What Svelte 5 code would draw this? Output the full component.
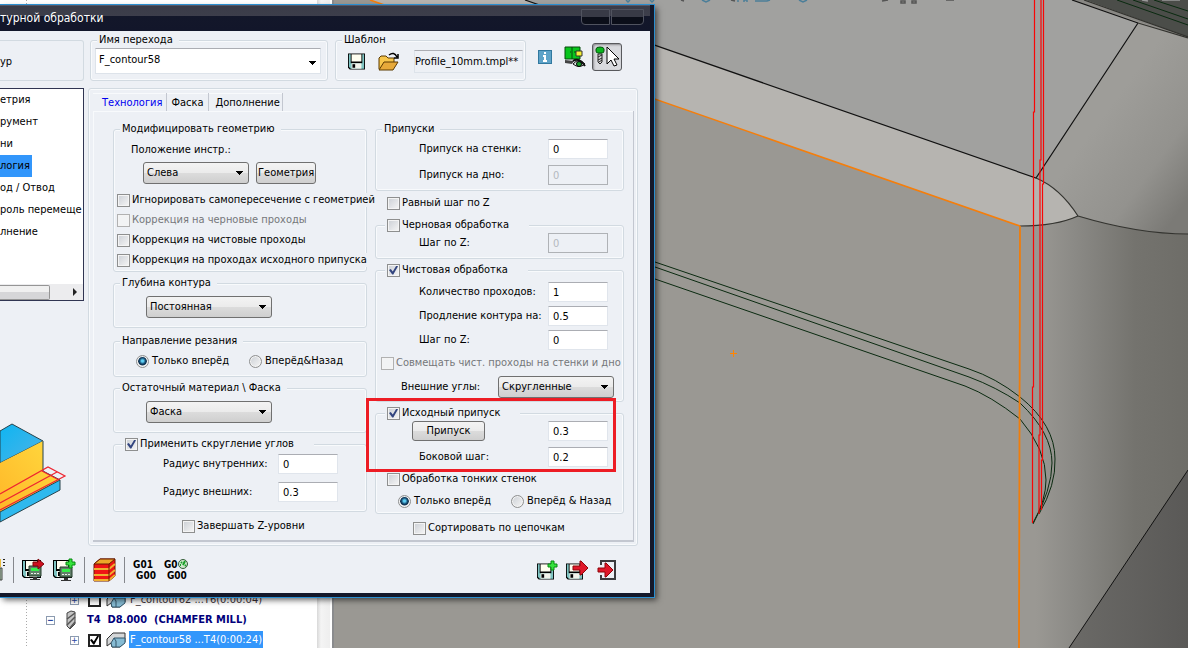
<script lang="ts">
  const pages = [
    "етрия",
    "румент",
    "ни",
    "логия",
    "од / Отвод",
    "роль перемеще",
    "лнение",
  ];
  let activePage = $state("логия");

  const tabs = ["Технология", "Фаска", "Дополнение"];
  let activeTab = $state("Технология");

  let operationName = $state("F_contour58");
  let direction = $state("forward");
  let thinDirection = $state("forward");

  const corrections = [
    { id: "ignore", label: "Игнорировать самопересечение с геометрией", disabled: false },
    { id: "rough", label: "Коррекция на черновые проходы", disabled: true },
    { id: "finish", label: "Коррекция на чистовые проходы", disabled: false },
    { id: "stock", label: "Коррекция на проходах исходного припуска", disabled: false },
  ];
</script>

{#snippet disk()}
  <path d="M0 0h19v18h-17l-2-2z" fill="#000" />
  <path d="M1 1h2v10h13v-10h2v16h-15l-2-2z" fill="#7fc4c2" />
  <path d="M4 1h11v8h-11z" fill="#fffef0" />
  <path d="M4 11h11v6h-11z" fill="#f4f4ec" />
  <path d="M5 12h3v4h-3z" fill="#000" />
{/snippet}

{#snippet arrow()}
  <path d="M0 5h7v-5h1l7 7-7 7h-1v-5h-7z" fill="#e0182a" stroke="#8d0508" />
{/snippet}

{#snippet plus()}
  <path d="M4 1h3v3h3v3h-3v3h-3v-3h-3v-3h3z" fill="#35e23c" stroke="#078a10" />
{/snippet}

{#snippet machine()}
  <path d="M0 0h12v10h-12z" fill="#62806a" stroke="#243c2b" />
  <path d="M2 2h8v3h-8z" fill="#35f04a" />
  <path d="M2 7h2v1h-2zM5 7h2v1h-2zM8 7h2v1h-2z" fill="#e8efe8" />
  <path d="M4 11h4v2h3v1h-10v-1h3z" fill="#333" />
{/snippet}

{#snippet part()}
  <svg width="20" height="16" viewBox="0 0 20 16">
    <path d="M1 7l6-6h12v9l-5 5h-8l-1-4-4 3z" fill="#d5d7d8" stroke="#333" />
    <path d="M5 11l3-5h11v5l-5 4h-8z" fill="#86bbd3" stroke="#34566a" />
    <path d="M8 6l2 3v6" fill="none" stroke="#34566a" />
  </svg>
{/snippet}

<div class="workspace">
  <svg class="scene" viewBox="334 0 854 648" preserveAspectRatio="xMinYMin slice" aria-hidden="true">
    <defs>
      <linearGradient id="round" gradientUnits="userSpaceOnUse" x1="1036" y1="0" x2="1188" y2="0">
        <stop offset="0" stop-color="#9a9893" />
        <stop offset=".25" stop-color="#8b8a86" />
        <stop offset=".65" stop-color="#74736e" />
        <stop offset="1" stop-color="#6e6d68" />
      </linearGradient>
      <linearGradient id="slope" gradientUnits="userSpaceOnUse" x1="1100" y1="120" x2="1195" y2="190">
        <stop offset="0" stop-color="#9e9d99" />
        <stop offset=".6" stop-color="#93928e" />
        <stop offset="1" stop-color="#7b7a76" />
      </linearGradient>
      <linearGradient id="dark" x1="0" y1="0" x2="1" y2="0">
        <stop offset="0" stop-color="#6b6a67" />
        <stop offset="1" stop-color="#5a5957" />
      </linearGradient>
    </defs>
    <rect x="334" width="854" height="648" fill="#9a9893" />
    <path d="M525 0h547l66 23-102 155z" fill="#a1a19f" />
    <path d="M370 0h155l511 178q24 10 42 38-22 10-58 10z" fill="#b6b4b0" />
    <path d="M1036 178l102-155 50 15v196q-50 0-110-18-18-28-42-38z" fill="url(#slope)" />
    <path d="M1036 226q24-2 42-10 60 18 110 18v414h-152z" fill="url(#round)" />
    <path d="M1188 470v178h-119z" fill="url(#dark)" />
    <path d="M1072 0h116v38z" fill="#898884" />
    <path d="M1086 0h102v37z" fill="#4b4d49" />
    <g fill="none" stroke="#111" stroke-width="1.2">
      <path d="M525 0l511 178 102-155M1072 0l66 23" />
      <path d="M1138 23l50 15M1036 178q24 10 42 38-22 10-58 10M1078 216q60 18 110 18" stroke="#33332f" />
      <path d="M1084 0l104 37" stroke="#33332f" />
      <path d="M1188 470l-119 178" stroke-width="1" />
    </g>
    <g fill="none" stroke="#0a2a10">
      <path d="M655 262l314 107q27 9 51 28 35 28 35 62 1 26-16 55" />
      <path d="M655 267l314 110q27 10 51 26 32 30 32 60 0 26-19 61" />
      <path d="M655 279l310 107q26 10 55 33 26 30 26 61 0 20-13 43" />
      <path d="M1117 0l71 25M1133 0l55 19M1154 0l34 11" />
    </g>
    <path d="M370 0l650 226" fill="none" stroke="#f57e0b" stroke-width="1.6" />
    <path d="M1020 226l-1 422" fill="none" stroke="#ef7d0c" stroke-width="1.8" />
    <path d="M730 353.500h7M733.500 350v7" stroke="#ff8400" />
    <path
      d="M1034.500 0v112h-1v275h-1v136M1041 0v160h-1v275h-1v79M1043.500 0v184h-1v276h-1v50"
      fill="none"
      stroke="#f80606"
      stroke-width="1.2"
    />
    <g fill="none" stroke="#4c7f99" stroke-width="1.500">
      <path d="M626 0l2 2 2-2M650 0l2 2 2-2M702 0l4 2 4-2M738 2v-2M744 2v-2h3v2M755 1h12l3-1M799 0l4 2 4-2" />
      <path d="M681 0l3 1M731 0l4 1M882 1l6-1M901 1h4v2h-4zM912 1h4v2h-4zM946 0h8" stroke="#555" />
      <path d="M1142 0l6 1M1162 0h18" stroke="#999" />
    </g>
  </svg>

  <aside class="tree">
    <div class="tree-rows">
      <div class="tree-row child">
        <span class="expander">+</span>
        <input type="checkbox" class="tree-check" aria-label="F_contour62" />
        {@render part()}
        <span class="tree-name">F_contour62 ...T6(0:00:04)</span>
      </div>
      <div class="tree-row tool">
        <span class="expander">−</span>
        <svg width="14" height="20" viewBox="0 0 14 20">
          <path d="M3 3l4-2 4 1v12l-5 5-3-3z" fill="#c4c4c4" stroke="#444" />
          <path d="M3 9l8-6M3 15l8-8M6 18l5-6" stroke="#555" stroke-width="1.500" />
        </svg>
        <span>T4&nbsp; D8.000&nbsp; (CHAMFER MILL)</span>
      </div>
      <div class="tree-row child">
        <span class="expander">+</span>
        <input type="checkbox" class="tree-check" aria-label="F_contour58" checked />
        {@render part()}
        <span class="tree-name selected">F_contour58 ...T4(0:00:24)</span>
      </div>
    </div>
    <div class="tree-scroll"></div>
  </aside>

  <section class="dialog">
    <header class="titlebar">
      <h1>турной обработки</h1>
      <div class="caption-buttons">
        <button aria-label="Свернуть"></button>
        <button aria-label="Закрыть"></button>
      </div>
    </header>

    <div class="client">
      <div class="top-row">
        <div class="type-box">ур</div>

        <fieldset class="name-box">
          <legend>Имя перехода</legend>
          <select class="name-select" bind:value={operationName} aria-label="Имя перехода">
            <option>F_contour58</option>
            <option>F_contour62</option>
          </select>
        </fieldset>

        <fieldset class="template-box">
          <legend>Шаблон</legend>
          <div class="template-row">
            <button class="icon" aria-label="Сохранить шаблон">
              <svg width="17" height="17" viewBox="0 0 19 18">{@render disk()}</svg>
            </button>
            <button class="icon" aria-label="Открыть шаблон">
              <svg width="22" height="20" viewBox="0 0 22 20">
                <path d="M1 17v-11l2-2h5l2 2h6v4" fill="#f7c64b" stroke="#5d3a00" />
                <path d="M1 18l5-8h14l-5 8z" fill="#e7a93a" stroke="#5d3a00" />
                <path d="M11 3q5-4 8 2M20 2v4h-4" fill="none" stroke="#000" stroke-width="1.500" />
              </svg>
            </button>
            <input class="template-name" value="Profile_10mm.tmpl**" readonly aria-label="Шаблон" />
          </div>
        </fieldset>

        <div class="view-tools">
          <button class="icon" aria-label="Информация">
            <svg width="14" height="14" viewBox="0 0 14 14">
              <path d="M0 0h14v14h-14z" fill="#31789f" />
              <path d="M1 1h12v12h-12z" fill="#5ea3c8" />
              <path d="M6 2h2v2h-2zM5 5h3v5h1v2h-4v-2h1v-3h-1z" fill="#fff" />
            </svg>
          </button>
          <button class="icon" aria-label="Показать">
            <svg width="22" height="22" viewBox="0 0 22 22">
              <path d="M1 1h15v12h-15z" fill="#08c51c" stroke="#064b0c" />
              <path d="M8 1v12M6 6h1M10 6h2" stroke="#064b0c" />
              <path d="M12 5h6v5h-6z" fill="#f5ef35" stroke="#333" />
              <path d="M1 14l9 1-2 3-7-1z" fill="#444" />
              <path d="M9 18q6-7 12 0-6 5-12 0z" fill="#dfe7e2" stroke="#111" />
              <circle cx="15" cy="18" r="2.500" fill="#17a32a" stroke="#000" />
              <path d="M9 15q6-4 12 5" fill="none" stroke="#111" stroke-width="2" />
            </svg>
          </button>
          <button class="icon pressed" aria-label="Выбрать инструмент">
            <svg width="24" height="22" viewBox="0 0 24 22">
              <path d="M3 8h4v8l-2 2-2-2z" fill="#ddd" stroke="#222" />
              <path d="M3 11l4-2M3 14l4-2M4 16l3-2" stroke="#222" />
              <path d="M1 3q0-2 4-2t4 2v2q0 2-2 2h-4q-2 0-2-2z" fill="#0bb51d" stroke="#05520d" />
              <path d="M12 1v17l4-4 3 6 3-1-3-6h5z" fill="#fff" stroke="#000" />
            </svg>
          </button>
        </div>
      </div>

      <div class="middle">
        <div class="side">
          <div class="page-list">
            <ul>
              {#each pages as page}
                <li>
                  <button class:active={activePage === page} onclick={() => (activePage = page)}>{page}</button>
                </li>
              {/each}
            </ul>
            <div class="list-scroll"><span class="thumb"></span><span class="scroll-arrow"></span></div>
          </div>
          <svg class="preview" width="67" height="102" viewBox="0 0 67 102" aria-hidden="true">
            <defs>
              <linearGradient id="top" x1="0" y1="0" x2="1" y2="1">
                <stop offset="0" stop-color="#0db5f2" />
                <stop offset="1" stop-color="#4fb3e6" />
              </linearGradient>
              <linearGradient id="wall" x1="0" y1="1" x2="1" y2="0">
                <stop offset="0" stop-color="#ffb628" />
                <stop offset="1" stop-color="#ffdb3f" />
              </linearGradient>
            </defs>
            <path d="M0 8l12-7 31 17-43 22z" fill="url(#top)" stroke="#27434c" />
            <path d="M0 40l43-22v30l17 9-60 33z" fill="url(#wall)" />
            <path d="M43 18v30l17 9" fill="none" stroke="#27434c" />
            <path d="M0 89l60-32v10l-60 32z" fill="#2fb9ee" stroke="#27434c" />
            <path d="M0 71l48-27 17 9-65 34M0 80l57-31M42 48l17 9" fill="none" stroke="#ee2530" stroke-width="1.200" />
          </svg>
        </div>

        <div class="tab-frame">
          <div class="tabs">
            {#each tabs as tab}
              <button class:active={activeTab === tab} onclick={() => (activeTab = tab)}>{tab}</button>
            {/each}
          </div>

          <div class="tab-body">
            <div class="column">
              <fieldset class="group modify">
                <legend>Модифицировать геометрию</legend>
                <label class="line position" for="position">Положение инстр.:</label>
                <div class="row position-row">
                  <select id="position" class="short"><option>Слева</option><option>Справа</option></select>
                  <button class="push">Геометрия</button>
                </div>
                {#each corrections as item}
                  <label class="check" class:disabled={item.disabled}>
                    <input type="checkbox" disabled={item.disabled} /><span>{item.label}</span>
                  </label>
                {/each}
              </fieldset>

              <fieldset class="group">
                <legend>Глубина контура</legend>
                <div class="row single">
                  <select aria-label="Глубина контура"><option>Постоянная</option><option>Переменная</option></select>
                </div>
              </fieldset>

              <fieldset class="group cutting">
                <legend>Направление резания</legend>
                <div class="radios">
                  <label><input type="radio" name="dir" value="forward" bind:group={direction} />Только вперёд</label>
                  <label><input type="radio" name="dir" value="both" bind:group={direction} />Вперёд&amp;Назад</label>
                </div>
              </fieldset>

              <fieldset class="group">
                <legend>Остаточный материал \ Фаска</legend>
                <div class="row single">
                  <select aria-label="Остаточный материал \ Фаска"><option>Фаска</option><option>Нет</option></select>
                </div>
              </fieldset>

              <fieldset class="group">
                <legend class="with-check">
                  <label><input type="checkbox" checked />Применить скругление углов</label>
                </legend>
                <div class="fields radii">
                  <label for="inner">Радиус внутренних:</label>
                  <input id="inner" type="text" value="0" />
                  <label for="outer">Радиус внешних:</label>
                  <input id="outer" type="text" value="0.3" />
                </div>
              </fieldset>

              <label class="footer-check"><input type="checkbox" />Завершать Z-уровни</label>
            </div>

            <div class="column">
              <fieldset class="group">
                <legend>Припуски</legend>
                <div class="fields stock">
                  <label for="wall-stock">Припуск на стенки:</label>
                  <input id="wall-stock" type="text" value="0" />
                  <label for="floor-stock">Припуск на дно:</label>
                  <input id="floor-stock" type="text" value="0" disabled />
                </div>
              </fieldset>

              <label class="equal-step"><input type="checkbox" />Равный шаг по Z</label>

              <fieldset class="group">
                <legend class="with-check">
                  <label><input type="checkbox" />Черновая обработка</label>
                </legend>
                <div class="fields roughing">
                  <label for="rough-step">Шаг по Z:</label>
                  <input id="rough-step" type="text" value="0" disabled />
                </div>
              </fieldset>

              <fieldset class="group">
                <legend class="with-check">
                  <label><input type="checkbox" checked />Чистовая обработка</label>
                </legend>
                <div class="fields finishing">
                  <label for="passes">Количество проходов:</label>
                  <input id="passes" type="text" value="1" />
                  <label for="extend">Продление контура на:</label>
                  <input id="extend" type="text" value="0.5" />
                  <label for="finish-step">Шаг по Z:</label>
                  <input id="finish-step" type="text" value="0" />
                </div>
                <label class="combine disabled">
                  <input type="checkbox" disabled />Совмещать чист. проходы на стенки и дно
                </label>
                <div class="row corners">
                  <label for="corners">Внешние углы:</label>
                  <select id="corners"><option>Скругленные</option><option>Острые</option></select>
                </div>
              </fieldset>

              <fieldset class="group">
                <legend class="with-check">
                  <label><input type="checkbox" checked />Исходный припуск</label>
                </legend>
                <div class="highlight"></div>
                <div class="fields source">
                  <button class="push">Припуск</button>
                  <input type="text" value="0.3" aria-label="Припуск" />
                  <label for="side-step">Боковой шаг:</label>
                  <input id="side-step" type="text" value="0.2" />
                </div>
                <label class="thin"><input type="checkbox" />Обработка тонких стенок</label>
                <div class="radios thin-radios">
                  <label><input type="radio" name="thin" value="forward" bind:group={thinDirection} />Только вперёд</label>
                  <label><input type="radio" name="thin" value="both" bind:group={thinDirection} />Вперёд &amp; Назад</label>
                </div>
              </fieldset>

              <label class="footer-check"><input type="checkbox" />Сортировать по цепочкам</label>
            </div>
          </div>
        </div>
      </div>

      <footer class="toolbar">
        <button class="icon" aria-label="Симуляция">
          <svg width="5" height="24" viewBox="0 0 5 24">
            <path d="M0 1h1v8h-1z" fill="#e8b93a" />
            <path d="M3 1h2v1h-2zM3 4h2v1h-2zM3 7h2v1h-2z" fill="#222" />
            <path d="M0 10h2v12h-2z" fill="#b8d4b8" stroke="#444" />
          </svg>
        </button>
        <span class="divider"></span>
        <button class="icon" aria-label="Сохранить и рассчитать">
          <svg width="23" height="24" viewBox="0 0 23 24">
            <g transform="translate(0 2)">{@render disk()}</g>
            <g transform="translate(7 8)">{@render machine()}</g>
            <path d="M11 4h5v-3l6 5-6 5v-3h-5z" fill="#cf1020" stroke="#7e0509" />
          </svg>
        </button>
        <button class="icon copy" aria-label="Сохранить, копировать и рассчитать">
          <svg width="23" height="24" viewBox="0 0 23 24">
            <g transform="translate(0 2)">{@render disk()}</g>
            <g transform="translate(7 9)">{@render machine()}</g>
            <g transform="translate(12 0)">{@render plus()}</g>
          </svg>
        </button>
        <span class="divider"></span>
        <button class="icon" aria-label="Слои">
          <svg width="23" height="24" viewBox="0 0 23 24">
            <path d="M1 6l6-5h15v17l-6 5h-15z" fill="#f01515" stroke="#6b1a00" />
            <path d="M1 6l6-5h15l-6 5z" fill="#eda928" stroke="#6b1a00" />
            <path d="M1 11h15l6-5M1 17h15l6-5M1 22h15l6-5" fill="none" stroke="#f0b030" stroke-width="2" />
            <path d="M16 6v17" stroke="#6b1a00" />
          </svg>
        </button>
        <span class="divider"></span>
        <button class="gcode"><span>G01</span><span class="second">G00</span></button>
        <button class="gcode">
          <span class="gauge-line">G0<svg width="10" height="10" viewBox="0 0 10 10">
              <circle cx="5" cy="5" r="4.500" fill="#cfe8cc" stroke="#345c38" />
              <path d="M5 6l2-4M3 3l1 1M2 6h1M7 6l1 1" stroke="#189e28" stroke-width="2" />
            </svg></span>
          <span class="second">G00</span>
        </button>
        <span class="spacer"></span>
        <button class="icon" aria-label="Сохранить и копировать">
          <svg width="21" height="20" viewBox="0 0 21 20">
            <svg y="3" width="17" height="17" viewBox="0 0 19 18">{@render disk()}</svg>
            <g transform="translate(10 0)">{@render plus()}</g>
          </svg>
        </button>
        <button class="icon" aria-label="Сохранить и выйти">
          <svg width="23" height="20" viewBox="0 0 23 20">
            <svg y="3" width="17" height="17" viewBox="0 0 19 18">{@render disk()}</svg>
            <g transform="translate(7 1)">{@render arrow()}</g>
          </svg>
        </button>
        <button class="icon" aria-label="Выход">
          <svg width="19" height="20" viewBox="0 0 19 20">
            <path d="M4 5v-4h14v18h-14v-4" fill="none" stroke="#3c3c3e" stroke-width="2" />
            <g transform="translate(1 3)">{@render arrow()}</g>
          </svg>
        </button>
      </footer>
    </div>
  </section>
</div>

<style>
  :global(body) {
    margin: 0;
  }

  .workspace {
    position: relative;
    display: flex;
    min-height: 100vh;
    overflow: hidden;
    background: #9a9893;
    font-family: "DejaVu Sans Condensed", "DejaVu Sans", sans-serif;
    font-size: 11px;
    line-height: 14px;
    color: #000;
  }

  .workspace * {
    box-sizing: border-box;
  }

  .scene {
    order: 2;
    flex: 1;
    min-width: 0;
    height: 100vh;
  }

  button,
  input,
  select {
    font: inherit;
    color: inherit;
    margin: 0;
  }

  svg {
    display: block;
    flex: none;
  }

  /* operations tree behind the dialog */
  .tree {
    display: flex;
    flex: none;
    width: 334px;
    height: 100vh;
    background: #fff;
    border-right: 2px solid #8a8b8d;
    color: #3b3036;
  }

  .tree-rows {
    flex: 1;
    min-width: 0;
    display: flex;
    flex-direction: column;
    justify-content: flex-end;
    margin-bottom: -2px;
    background: repeating-linear-gradient(#aaa 0 1px, transparent 1px 3px) 26px 0 / 1px 100% no-repeat;
  }

  .tree-scroll {
    width: 13px;
    margin-right: 2px;
    background: linear-gradient(90deg, #d8d8d8, #f4f4f4 4px, #eee);
  }

  .tree-row {
    display: flex;
    align-items: center;
    gap: 5px;
    height: 20px;
    white-space: nowrap;
  }

  .child {
    padding-left: 70px;
  }

  .tool {
    padding-left: 46px;
    color: #00007b;
    font-weight: bold;
    gap: 9px;
  }

  .expander {
    width: 9px;
    height: 9px;
    border: 1px solid #8c9bb0;
    background: #fff;
    color: #2846a0;
    font-size: 9px;
    line-height: 7px;
    text-align: center;
  }

  .tree-name {
    padding: 2px 1px;
    margin-left: -2px;
  }

  .selected {
    background: #3296fb;
    color: #fff;
  }

  /* dialog window */
  .dialog {
    position: absolute;
    left: 0;
    top: 5px;
    width: 654px;
    border: solid #14182a;
    border-width: 0 4px 4px 0;
    outline: 1px solid #2b8fd0;
    box-shadow: 3px 3px 6px rgba(0, 0, 0, 0.6);
    background: #edf0f5;
  }

  .titlebar {
    display: flex;
    justify-content: space-between;
    height: 26px;
    border-top: 1px solid #555869;
    background: linear-gradient(#3a3c48, #3d3e4b 10px, #13172a 10px, #12162a);
  }

  h1 {
    margin: 0;
    font-size: 12px;
    font-weight: normal;
    line-height: 25px;
    color: #fff;
  }

  .caption-buttons {
    display: flex;
    gap: 1px;
    padding: 3px 6px 0 0;
  }

  .caption-buttons button {
    width: 29px;
    height: 16px;
    padding: 0;
    border: 1px solid #50535f;
    border-radius: 0 0 4px 0;
    background: linear-gradient(#383a46 50%, #0b0e19 50%);
  }

  .caption-buttons button:first-child {
    border-radius: 0 0 0 4px;
  }

  .caption-buttons button:last-child {
    width: 33px;
  }

  fieldset {
    position: relative;
    min-width: 0;
    margin: 0;
    padding: 0;
    border: 1px solid #d2dae1;
    border-radius: 3px;
    box-shadow: inset 0 0 0 1px #f8fafc;
  }

  legend {
    height: 14px;
    margin-left: 6px;
    padding: 0 6px 0 2px;
    background: #edf0f5;
  }

  .top-row {
    display: flex;
    align-items: flex-start;
    height: 50px;
    padding-top: 2px;
  }

  .type-box {
    width: 84px;
    height: 41px;
    margin: 7px 6px 0 0;
    padding-top: 14px;
    border: 1px solid #d2dae1;
    border-left: 0;
    border-radius: 0 3px 3px 0;
  }

  .name-box {
    flex: 1;
    height: 48px;
  }

  select {
    appearance: none;
    height: 22px;
    padding: 0 18px 0 3px;
    border: 1px solid #707070;
    border-radius: 3px;
    background:
      linear-gradient(#000, #000) right 5px top 8px / 7px 1px no-repeat,
      linear-gradient(#000, #000) right 6px top 9px / 5px 1px no-repeat,
      linear-gradient(#000, #000) right 7px top 10px / 3px 1px no-repeat,
      linear-gradient(#000, #000) right 8px top 11px / 1px 1px no-repeat,
      linear-gradient(#f3f3f3, #ebebeb 50%, #dcdcdc 50%, #cfcfcf);
  }

  .name-select {
    display: block;
    width: calc(100% - 10px);
    height: 26px;
    margin: 1px 4px 0;
    padding-bottom: 2px;
    border: 1px solid #dde3ea;
    border-top-color: #abadb3;
    border-radius: 0;
    background:
      linear-gradient(#000, #000) right 4px top 12px / 7px 1px no-repeat,
      linear-gradient(#000, #000) right 5px top 13px / 5px 1px no-repeat,
      linear-gradient(#000, #000) right 6px top 14px / 3px 1px no-repeat,
      linear-gradient(#000, #000) right 7px top 15px / 1px 1px no-repeat,
      #fff;
  }

  .template-box {
    width: 191px;
    height: 48px;
    margin-left: 7px;
  }

  .template-row {
    display: flex;
    align-items: center;
    gap: 13px;
    padding: 3px 2px 0 12px;
  }

  .template-name {
    flex: 1;
    min-width: 0;
    height: 23px;
    margin-left: 1px;
    padding: 0;
    border: 1px solid #dde3ea;
    border-top-color: #abadb3;
    background: #edf0f5;
  }

  .view-tools {
    display: flex;
    align-items: center;
    gap: 6px;
    padding: 6px 28px 0 12px;
    height: 42px;
  }

  .icon {
    display: block;
    padding: 0;
    border: 0;
    background: none;
  }

  .view-tools .icon:nth-child(2) {
    margin-left: 6px;
  }

  .view-tools .pressed {
    padding: 2px;
    border: 1px solid #58595c;
    border-radius: 3px;
    background: #d9dade;
    box-shadow: inset 1px 1px 2px #8d8e92;
  }

  .middle {
    display: flex;
    gap: 4px;
    padding: 7px 12px 0 0;
  }

  .side {
    flex: none;
    width: 84px;
  }

  .page-list {
    height: 213px;
    display: flex;
    flex-direction: column;
    overflow: hidden;
    border: 1px solid #303552;
    border-left: 0;
    background: #fff;
  }

  ul {
    flex: 1;
    margin: 0;
    padding: 0;
    list-style: none;
  }

  li {
    height: 22px;
  }

  li button {
    height: 22px;
    padding: 0 2px 0 0;
    border: 0;
    background: none;
    white-space: nowrap;
  }

  li .active {
    background: #3296fb;
  }

  .list-scroll {
    display: flex;
    align-items: center;
    justify-content: space-between;
    height: 16px;
    padding-right: 6px;
    background: #ececee;
  }

  .thumb {
    width: 50px;
    height: 15px;
    border: 1px solid #959595;
    border-left: 0;
    border-radius: 0 2px 2px 0;
    background: linear-gradient(#f0f0f0 50%, #d6d6d8 50%);
  }

  .scroll-arrow {
    border: 4px solid transparent;
    border-left-color: #222;
    border-right: 0;
  }

  .preview {
    margin-top: 122px;
  }

  .tab-frame {
    flex: 1;
    min-width: 0;
    padding: 4px 3px 3px 4px;
    border: 1px solid #d2dae1;
    border-radius: 3px;
    box-shadow: inset 0 0 0 1px #f8fafc;
  }

  .tabs {
    display: flex;
    height: 18px;
  }

  .tabs button {
    padding: 2px 4px 0;
    border: solid #c3c7d0;
    border-width: 0 1px 0 0;
    box-shadow: inset 0 1px #f8fafc;
    background: none;
  }

  .tabs button:first-child {
    padding-left: 9px;
  }

  .tabs button:last-child {
    padding: 2px 2px 0 7px;
  }

  .tabs .active {
    color: #0000f0;
  }

  .tab-body {
    display: grid;
    grid-template-columns: minmax(0, 254fr) minmax(0, 249fr);
    gap: 8px;
    padding: 11px 9px 5px 20px;
    border: solid #c3c7d0;
    border-width: 0 1px 2px 0;
    box-shadow: inset 1px 1px #f8fafc;
  }

  .column {
    display: flex;
    flex-direction: column;
    gap: 4px;
    white-space: nowrap;
  }

  label {
    display: flex;
    align-items: center;
  }

  .with-check {
    margin-left: 9px;
    padding: 0 20px 0 2px;
  }

  input[type="checkbox"],
  input[type="radio"] {
    appearance: none;
    position: relative;
    flex: none;
    width: 13px;
    height: 13px;
    margin-right: 2px;
    border: 1px solid #8e8f8f;
    background: linear-gradient(135deg, #cbcfd5, #f6f6f6);
    box-shadow: inset 0 0 0 1px #f4f4f4;
  }

  .tree-row input.tree-check {
    margin: 0 0 0 4px;
    border: 2px solid #222;
    background: #fff;
    box-shadow: none;
  }

  input[type="checkbox"]:checked::after {
    content: "";
    position: absolute;
    inset: 1px;
    background: #33457f;
    clip-path: polygon(0 50%, 20% 38%, 42% 66%, 82% 0, 100% 8%, 48% 100%, 36% 100%);
  }

  .tree-row .tree-check:checked::after {
    inset: 0;
    background: #000;
  }

  input[type="checkbox"]:disabled {
    border-color: #b1b1b1;
    background: #f2f3f4;
  }

  .disabled {
    color: #75777a;
  }

  input[type="radio"] {
    border-radius: 50%;
    margin-right: 3px;
  }

  input[type="radio"]:checked {
    background: radial-gradient(circle at 50% 45%, #5fd0f5 0 1px, #12486f 3px, #0f2f4c 4px, #eef0f2 5px);
  }

  input[type="text"] {
    width: 60px;
    height: 20px;
    padding: 0 4px;
    border: 1px solid #e0e5ec;
    border-top-color: #abadb3;
    background: #fff;
  }

  input[type="text"]:disabled {
    border-color: #afb2b6;
    background: #edf0f5;
    color: #b4b9c0;
  }

  .position {
    margin: 7px 0 5px 17px;
  }

  .row {
    display: flex;
    align-items: center;
  }

  .position-row {
    gap: 7px;
    margin: 0 0 6px 29px;
  }

  select.short {
    width: 106px;
  }

  .push {
    height: 22px;
    padding: 0 1px;
    border: 1px solid #707070;
    border-radius: 3px;
    background: linear-gradient(#f3f3f3, #ebebeb 50%, #dcdcdc 50%, #cfcfcf);
  }

  .modify .check {
    height: 20px;
    margin-left: 3px;
  }

  /* long captions run over the group border */
  .check span {
    background: #edf0f5;
  }

  .modify {
    padding-bottom: 1px;
  }

  .single {
    padding: 6px 0 9px 32px;
  }

  .single select {
    width: 126px;
  }

  .radios {
    display: flex;
    gap: 20px;
    padding: 6px 0 8px 22px;
  }

  .cutting {
    margin-top: 2px;
  }

  .fields {
    display: grid;
    align-items: center;
    grid-template-columns: 129px 60px;
  }

  .radii {
    grid-template-columns: 115px 60px;
    row-gap: 8px;
    padding: 3px 0 9px 49px;
  }

  .footer-check {
    margin: 3px 0 0 69px;
  }

  .column:last-child .footer-check {
    margin-left: 38px;
  }

  .stock {
    row-gap: 6px;
    padding: 3px 0 5px 43px;
  }

  .equal-step {
    margin: 1px 0 4px 12px;
  }

  .roughing {
    padding: 1px 0 5px 43px;
  }

  .finishing {
    row-gap: 4px;
    padding: 5px 0 6px 43px;
  }

  .combine {
    margin-left: 5px;
  }

  .corners {
    gap: 18px;
    padding: 6px 0 3px 25px;
  }

  .corners select {
    width: 116px;
  }

  .source {
    row-gap: 6px;
    padding: 1px 0 5px 43px;
  }

  .source .push {
    justify-self: start;
    width: 73px;
    height: 20px;
    margin-left: -7px;
  }

  /* frame that marks the source stock settings */
  .highlight {
    position: absolute;
    z-index: 1;
    inset: -22px 7px 41px -10px;
    border: 3px solid #ed1c24;
    pointer-events: none;
  }

  .thin {
    margin-left: 11px;
  }

  .thin-radios {
    padding: 8px 0 5px 22px;
  }

  .toolbar {
    display: flex;
    align-items: center;
    gap: 8px;
    height: 47px;
    padding: 0 34px 0 0;
  }

  .divider {
    width: 1px;
    height: 26px;
    background: #85878c;
  }

  .gcode {
    display: flex;
    flex-direction: column;
    align-items: flex-start;
    padding: 0;
    border: 0;
    background: none;
    font-size: 10px;
    font-weight: bold;
    line-height: 11px;
  }

  .second {
    padding-left: 3px;
  }

  .gauge-line {
    display: flex;
  }

  .spacer {
    flex: 1;
  }
</style>
